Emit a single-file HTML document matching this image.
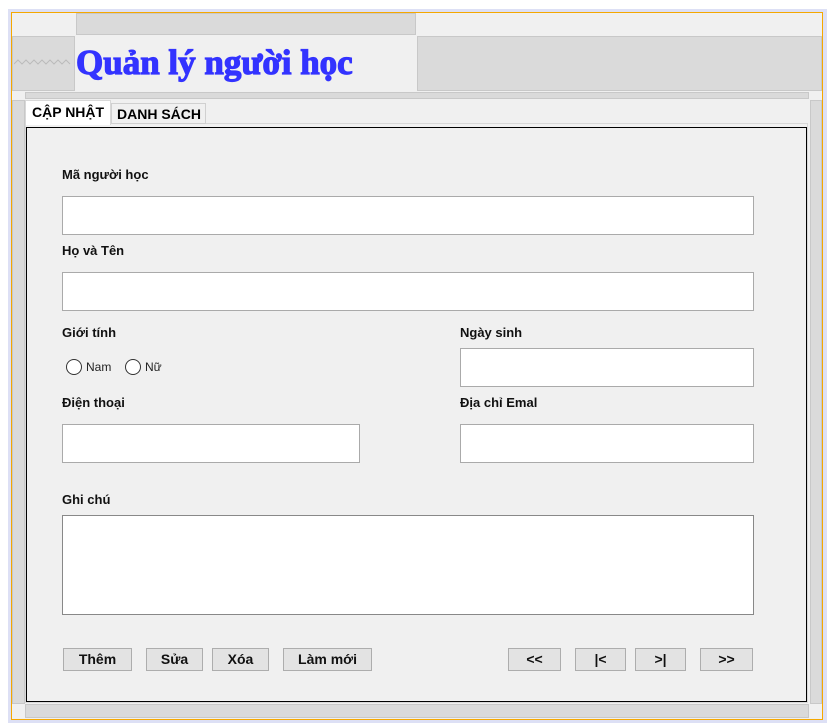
<!DOCTYPE html>
<html><head><meta charset="utf-8"><style>
*{margin:0;padding:0;box-sizing:border-box}
body{width:830px;height:726px;background:#fff;position:relative;overflow:hidden;font-family:"Liberation Sans",sans-serif}
div,span{position:absolute}
.g{background:#dadada;border:1px solid #c8c8c8}
.l{font-size:13px;font-weight:bold;color:#111}
.i{background:#fff;border:1px solid #aaa}
.b{background:#e3e3e3;border:1px solid #adadad;font-family:"Liberation Sans Narrow","Liberation Sans",sans-serif;font-weight:bold;font-size:14px;text-align:center;line-height:20px;height:23px;top:648px;color:#111}
.r{width:16px;height:16px;border:1px solid #333;border-radius:50%;background:#fff;top:359px}
.rt{font-size:12px;top:360px;color:#222}
.t{font-family:"Liberation Serif",serif;font-weight:700;font-size:35px;color:#3333ff;white-space:nowrap;left:76px;top:43px;-webkit-text-stroke:1.2px #3333ff}
</style></head><body>
<div style="left:8px;top:9px;width:819px;height:714px;background:#dde0f5"></div>
<div style="left:11px;top:12px;width:812px;height:708px;background:#f0f0f0;border:1px solid #f5a800"></div>
<div class="g" style="left:76px;top:13px;width:340px;height:22px"></div>
<div class="g" style="left:12px;top:36px;width:63px;height:55px"></div>
<svg style="position:absolute;left:14px;top:58px" width="58" height="8"><polyline fill="none" stroke="#bbb" stroke-width="1" points="0,6 4,2 8,6 12,2 16,6 20,2 24,6 28,2 32,6 36,2 40,6 44,2 48,6 52,2 56,6"/></svg>
<div class="t">Quản lý người học</div>
<div class="g" style="left:417px;top:36px;width:405px;height:55px"></div>
<div class="g" style="left:25px;top:92px;width:784px;height:7px"></div>
<div class="g" style="left:12px;top:100px;width:13px;height:604px"></div>
<div class="g" style="left:810px;top:100px;width:12px;height:604px"></div>
<div style="left:25px;top:123px;width:783px;height:580px;border:1px solid #d8d8d8"></div>
<div style="left:25px;top:100px;width:86px;height:25px;background:#fff;border:1px solid #d8d8d8;border-bottom:none;font-size:14px;font-weight:bold;line-height:22px;padding-left:6px">CẬP NHẬT</div>
<div style="left:111px;top:103px;width:95px;height:21px;background:#f0f0f0;border:1px solid #d0d0d0;font-size:14px;font-weight:bold;line-height:20px;padding-left:5px">DANH SÁCH</div>
<div style="left:26px;top:127px;width:781px;height:575px;border:1px solid #000"></div>
<div class="l" style="left:62px;top:167px">Mã người học</div>
<div class="i" style="left:62px;top:196px;width:692px;height:39px"></div>
<div class="l" style="left:62px;top:243px">Họ và Tên</div>
<div class="i" style="left:62px;top:272px;width:692px;height:39px"></div>
<div class="l" style="left:62px;top:325px">Giới tính</div>
<div class="r" style="left:66px"></div><span class="rt" style="left:86px">Nam</span>
<div class="r" style="left:125px"></div><span class="rt" style="left:145px">Nữ</span>
<div class="l" style="left:460px;top:325px">Ngày sinh</div>
<div class="i" style="left:460px;top:348px;width:294px;height:39px"></div>
<div class="l" style="left:62px;top:395px">Điện thoại</div>
<div class="i" style="left:62px;top:424px;width:298px;height:39px"></div>
<div class="l" style="left:460px;top:395px">Địa chỉ Emal</div>
<div class="i" style="left:460px;top:424px;width:294px;height:39px"></div>
<div class="l" style="left:62px;top:492px">Ghi chú</div>
<div class="i" style="left:62px;top:515px;width:692px;height:100px;border-color:#888"></div>
<div class="b" style="left:63px;width:69px">Thêm</div>
<div class="b" style="left:146px;width:57px">Sửa</div>
<div class="b" style="left:212px;width:57px">Xóa</div>
<div class="b" style="left:283px;width:89px">Làm mới</div>
<div class="b" style="left:508px;width:53px">&lt;&lt;</div>
<div class="b" style="left:575px;width:51px">|&lt;</div>
<div class="b" style="left:635px;width:51px">&gt;|</div>
<div class="b" style="left:700px;width:53px">&gt;&gt;</div>
<div class="g" style="left:25px;top:704px;width:784px;height:14px"></div>
</body></html>
